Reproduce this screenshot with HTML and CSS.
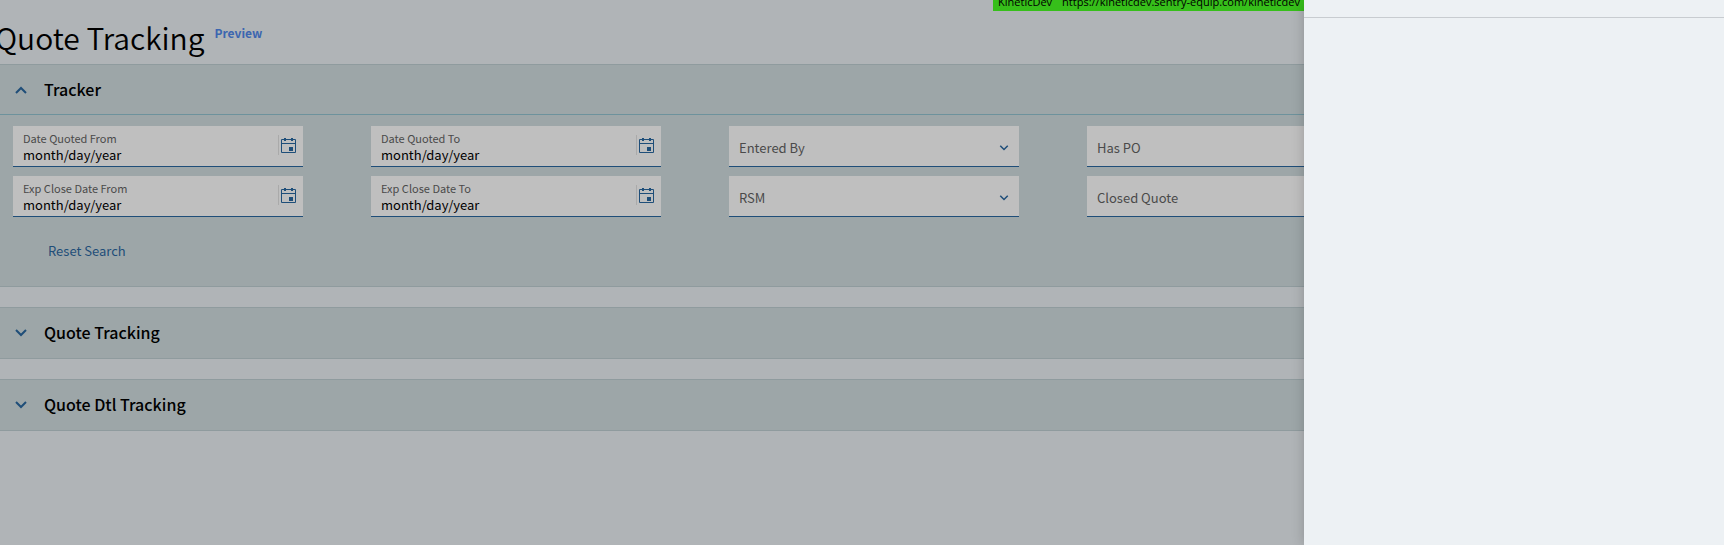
FILE: index.html
```html
<!DOCTYPE html>
<html lang="en">
<head>
<meta charset="UTF-8">
<meta name="viewport" content="width=device-width, initial-scale=1.0">
<title>Quote Tracking</title>
<link rel="stylesheet" href="styles.css">
</head>
<body>
<svg class="sprite" aria-hidden="true">
    <symbol id="calendar" viewBox="0 0 15 16">
        <path d="M.5 2.5h14v13H.5zM.5 6.5h14" fill="none" stroke="currentColor"/>
        <path d="M3 1h2v3H3zM10 1h2v3h-2zM8 10h4v4H8z" fill="currentColor"/>
    </symbol>
    <symbol id="chevron" viewBox="0 0 12 8">
        <path d="M1 1l5 5 5-5" fill="none" stroke="currentColor" stroke-width="2"/>
    </symbol>
</svg>

<div class="env"><span>KineticDev</span><span>https://kineticdev.sentry-equip.com/kineticdev</span></div>

<main>
    <header class="page-header">
        <h1>Quote Tracking</h1>
        <a href="#" class="preview">Preview</a>
    </header>

    <section class="panel">
        <h2><button type="button" class="panel-header open" aria-expanded="true">
            <svg class="arrow up"><use href="#chevron"/></svg>Tracker
        </button></h2>
        <form class="panel-body">
            <div class="fields">
                <div class="field">
                    <label for="quotedFrom">Date Quoted From</label>
                    <input type="text" id="quotedFrom" placeholder="month/day/year">
                    <button type="button" class="pick" aria-label="Open calendar"><svg><use href="#calendar"/></svg></button>
                </div>
                <div class="field">
                    <label for="quotedTo">Date Quoted To</label>
                    <input type="text" id="quotedTo" placeholder="month/day/year">
                    <button type="button" class="pick" aria-label="Open calendar"><svg><use href="#calendar"/></svg></button>
                </div>
                <div class="field combo">
                    <label for="enteredBy">Entered By</label>
                    <select id="enteredBy"><option></option></select>
                    <svg class="caret"><use href="#chevron"/></svg>
                </div>
                <div class="field combo">
                    <label for="hasPo">Has PO</label>
                    <select id="hasPo"><option></option></select>
                    <svg class="caret"><use href="#chevron"/></svg>
                </div>
                <div class="field">
                    <label for="closeFrom">Exp Close Date From</label>
                    <input type="text" id="closeFrom" placeholder="month/day/year">
                    <button type="button" class="pick" aria-label="Open calendar"><svg><use href="#calendar"/></svg></button>
                </div>
                <div class="field">
                    <label for="closeTo">Exp Close Date To</label>
                    <input type="text" id="closeTo" placeholder="month/day/year">
                    <button type="button" class="pick" aria-label="Open calendar"><svg><use href="#calendar"/></svg></button>
                </div>
                <div class="field combo">
                    <label for="rsm">RSM</label>
                    <select id="rsm"><option></option></select>
                    <svg class="caret"><use href="#chevron"/></svg>
                </div>
                <div class="field combo">
                    <label for="closedQuote">Closed Quote</label>
                    <select id="closedQuote"><option></option></select>
                    <svg class="caret"><use href="#chevron"/></svg>
                </div>
            </div>
            <button type="reset" class="reset">Reset Search</button>
        </form>
    </section>

    <section class="panel">
        <h2><button type="button" class="panel-header" aria-expanded="false">
            <svg class="arrow"><use href="#chevron"/></svg>Quote Tracking
        </button></h2>
    </section>

    <section class="panel">
        <h2><button type="button" class="panel-header" aria-expanded="false">
            <svg class="arrow"><use href="#chevron"/></svg>Quote Dtl Tracking
        </button></h2>
    </section>
</main>

<aside class="drawer">
    <div class="drawer-header"></div>
</aside>
</body>
</html>
```
FILE: styles.css
```css
* {
    box-sizing: border-box;
}
body {
    margin: 0;
    min-height: 100vh;
    overflow: hidden;
    background-color: #b0b4b7;
    color: #000;
    font-family: "Noto Sans CJK JP", "Noto Sans", sans-serif;
    font-size: 13px;
}
button, input, select {
    font: inherit;
    color: inherit;
    border: 0;
    padding: 0;
    background: none;
}
h1, h2 {
    margin: 0;
    font-weight: normal;
}
.sprite {
    display: none;
}
/* environment banner, mostly scrolled off the top */
.env {
    position: absolute;
    top: -8px;
    right: 420px;
    display: flex;
    gap: 10px;
    height: 19px;
    padding: 0 4px 0 5px;
    background-color: #36bf1a;
    font-family: "Open Sans", sans-serif;
    font-size: 11px;
    line-height: 20px;
}
.page-header {
    display: flex;
    align-items: flex-start;
    gap: 10px;
    height: 64px;
    margin-left: -5px;
}
h1 {
    font-size: 30px;
    font-weight: 350;
    line-height: 74px;
}
.preview {
    margin-top: 23px;
    color: #3c66b0;
    font-size: 12px;
    font-weight: 700;
    line-height: 20px;
    text-decoration: none;
}
.panel {
    margin-bottom: 20px;
    border: 1px solid #8f9b9e;
    border-width: 1px 0;
    background-color: #9da6a8;
}
.panel-header {
    display: flex;
    align-items: center;
    width: 100%;
    height: 50px;
    padding: 0 0 2px 15px;
    font-size: 16px;
    font-weight: 500;
}
.panel-header.open {
    border-bottom: 1px solid #6d929c;
}
.arrow {
    width: 12px;
    height: 8px;
    margin: 2px 17px 0 0;
    color: #1f4e79;
}
.arrow.up {
    transform: rotate(180deg);
}
.panel-body {
    padding: 11px 13px 25px;
}
.fields {
    display: grid;
    grid-template-columns: repeat(auto-fill, 290px);
    gap: 9px 68px;
}
.field {
    display: grid;
    grid-template-columns: 1fr 25px;
    grid-template-rows: 16px 20px;
    align-items: center;
    height: 41px;
    padding-top: 4px;
    border-bottom: 1px solid #1f4e79;
    background-color: #bfbfbf;
}
.field label {
    padding-left: 10px;
    color: #4a4a4a;
    font-size: 11px;
    line-height: 16px;
}
.field input {
    grid-row: 2;
    grid-column: 1;
    width: 100%;
    height: 20px;
    padding: 0 0 4px 10px;
}
.field input::placeholder {
    color: #000;
    opacity: 1;
}
.pick {
    grid-row: 1 / 3;
    grid-column: 2;
    align-self: start;
    height: 20px;
    margin-top: 5px;
    border-left: 1px solid #aaa;
    color: #1f4e79;
    line-height: 0;
    text-align: left;
    padding-left: 2px;
}
.pick svg {
    width: 15px;
    height: 16px;
}
.field.combo {
    grid-template-rows: 36px;
}
.combo label {
    grid-row: 1;
    grid-column: 1;
    font-size: 13px;
}
.combo select {
    grid-row: 1;
    grid-column: 1 / 3;
    width: 100%;
    height: 36px;
    appearance: none;
}
.caret {
    grid-row: 1;
    grid-column: 2;
    width: 10px;
    height: 6px;
    margin-left: 5px;
    color: #1f4e79;
    pointer-events: none;
}
.reset {
    display: block;
    margin: 24px 0 0 35px;
    color: #1f4e79;
    line-height: 20px;
}
.drawer {
    position: fixed;
    top: 0;
    right: 0;
    bottom: 0;
    width: 420px;
    background-color: #edf1f4;
    box-shadow: 0 0 12px rgba(0, 0, 0, 0.2);
}
.drawer-header {
    height: 18px;
    border-bottom: 1px solid #c8ccd0;
}
```
